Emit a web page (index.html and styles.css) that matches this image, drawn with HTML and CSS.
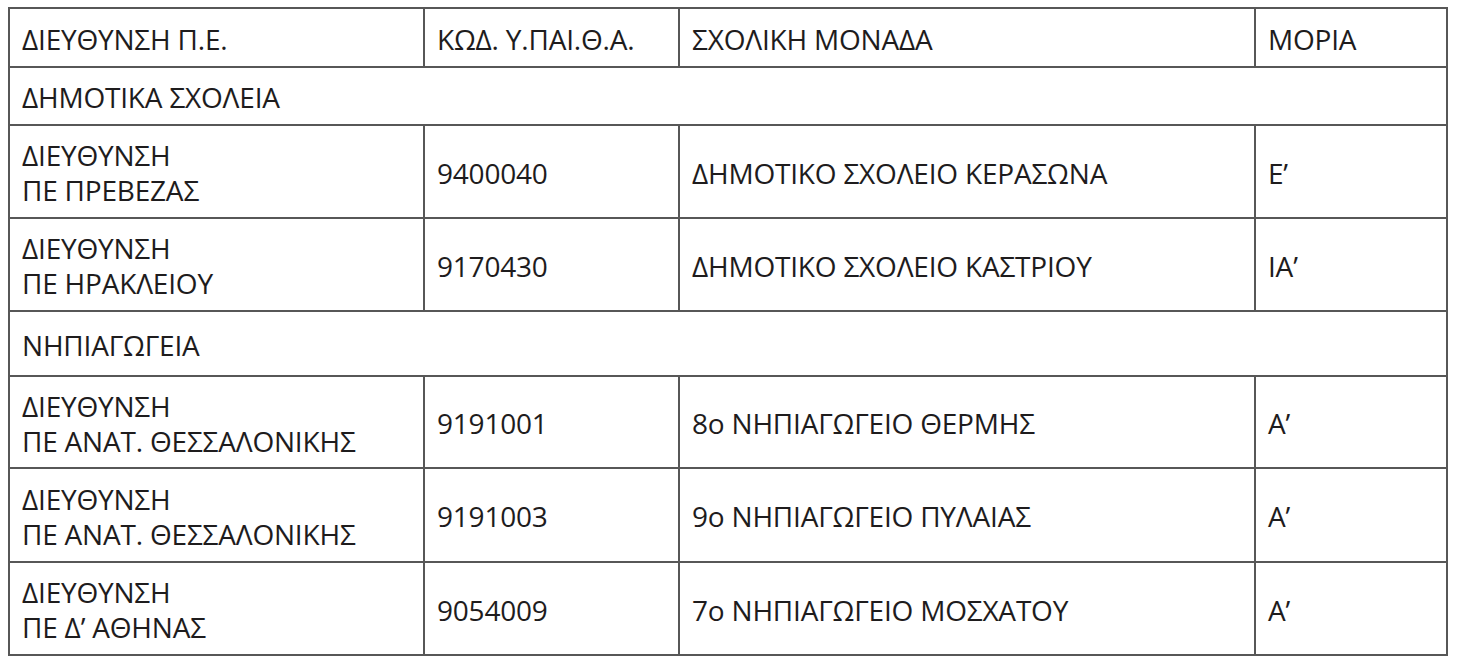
FILE: index.html
```html
<!DOCTYPE html>
<html lang="el">
<head>
<meta charset="utf-8">
<title>Σχολικές μονάδες</title>
<link rel="stylesheet" href="styles.css">
</head>
<body>
<table class="schools">
  <colgroup>
    <col class="c-dir">
    <col class="c-code">
    <col class="c-unit">
    <col class="c-pts">
  </colgroup>
  <tbody>
    <tr class="r-head">
      <td>ΔΙΕΥΘΥΝΣΗ Π.Ε.</td>
      <td>ΚΩΔ. Υ.ΠΑΙ.Θ.Α.</td>
      <td>ΣΧΟΛΙΚΗ ΜΟΝΑΔΑ</td>
      <td>ΜΟΡΙΑ</td>
    </tr>
    <tr class="r-sec1">
      <td colspan="4">ΔΗΜΟΤΙΚΑ ΣΧΟΛΕΙΑ</td>
    </tr>
    <tr class="r-a">
      <td>ΔΙΕΥΘΥΝΣΗ<br>ΠΕ ΠΡΕΒΕΖΑΣ</td>
      <td>9400040</td>
      <td>ΔΗΜΟΤΙΚΟ ΣΧΟΛΕΙΟ ΚΕΡΑΣΩΝΑ</td>
      <td>Ε’</td>
    </tr>
    <tr class="r-a">
      <td>ΔΙΕΥΘΥΝΣΗ<br>ΠΕ ΗΡΑΚΛΕΙΟΥ</td>
      <td>9170430</td>
      <td>ΔΗΜΟΤΙΚΟ ΣΧΟΛΕΙΟ ΚΑΣΤΡΙΟΥ</td>
      <td>ΙΑ’</td>
    </tr>
    <tr class="r-sec2">
      <td colspan="4">ΝΗΠΙΑΓΩΓΕΙΑ</td>
    </tr>
    <tr class="r-b">
      <td>ΔΙΕΥΘΥΝΣΗ<br>ΠΕ ΑΝΑΤ. ΘΕΣΣΑΛΟΝΙΚΗΣ</td>
      <td>9191001</td>
      <td>8ο ΝΗΠΙΑΓΩΓΕΙΟ ΘΕΡΜΗΣ</td>
      <td>Α’</td>
    </tr>
    <tr class="r-c">
      <td>ΔΙΕΥΘΥΝΣΗ<br>ΠΕ ΑΝΑΤ. ΘΕΣΣΑΛΟΝΙΚΗΣ</td>
      <td>9191003</td>
      <td>9ο ΝΗΠΙΑΓΩΓΕΙΟ ΠΥΛΑΙΑΣ</td>
      <td>Α’</td>
    </tr>
    <tr class="r-a">
      <td>ΔΙΕΥΘΥΝΣΗ<br>ΠΕ Δ’ ΑΘΗΝΑΣ</td>
      <td>9054009</td>
      <td>7ο ΝΗΠΙΑΓΩΓΕΙΟ ΜΟΣΧΑΤΟΥ</td>
      <td>Α’</td>
    </tr>
  </tbody>
</table>
</body>
</html>
```
FILE: styles.css
```css
html, body {
  margin: 0;
  padding: 0;
  background: #ffffff;
}

body {
  padding: 7px 0 0 8px;
  font-family: "Open Sans", "Noto Sans", "Liberation Sans", sans-serif;
  color: #1e1c1d;
}

.schools {
  border-collapse: collapse;
  table-layout: fixed;
  width: 1438px;
}

.c-dir { width: 415px; }
.c-code { width: 255px; }
.c-unit { width: 576px; }
.c-pts { width: 192px; }

.schools td {
  border: 2px solid #575757;
  padding: 3px 0 0 12px;
  font-size: 28px;
  line-height: 35px;
  vertical-align: middle;
  white-space: nowrap;
  letter-spacing: -0.2px;
}

.r-head { height: 59px; }
.r-sec1 { height: 58px; }
.r-a { height: 93px; }
.r-sec2 { height: 65px; }
.r-b { height: 92px; }
.r-c { height: 94px; }
```
